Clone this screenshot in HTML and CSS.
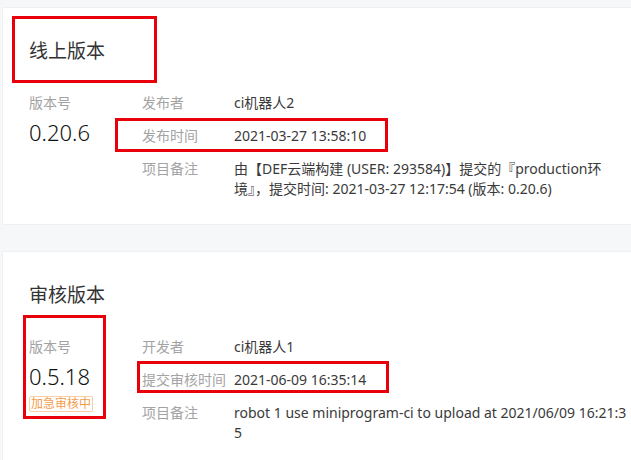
FILE: index.html
```html
<!DOCTYPE html>
<html lang="zh-CN">
<head>
    <meta charset="UTF-8">
    <meta name="viewport" content="width=device-width, initial-scale=1.0">
    <title>版本管理</title>
    <link rel="stylesheet" href="styles.css">
</head>
<body>
    <div class="page">
        <section class="card">
            <h2 class="card-title">线上版本</h2>
            <div class="info">
                <div class="version">
                    <p class="version-label">版本号</p>
                    <p class="version-num">0.20.6</p>
                </div>
                <ul class="fields">
                    <li><span class="label">发布者</span><span class="value">ci机器人2</span></li>
                    <li><span class="label">发布时间</span><span class="value">2021-03-27 13:58:10</span></li>
                    <li><span class="label">项目备注</span><span class="value">由【DEF云端构建 (USER: 293584)】提交的『production环境』，提交时间: 2021-03-27 12:17:54 (版本: 0.20.6)</span></li>
                </ul>
            </div>
            <div class="mark mark-title"></div>
            <div class="mark mark-time"></div>
        </section>

        <section class="card">
            <h2 class="card-title">审核版本</h2>
            <div class="info">
                <div class="version">
                    <p class="version-label">版本号</p>
                    <p class="version-num">0.5.18</p>
                    <span class="tag">加急审核中</span>
                </div>
                <ul class="fields">
                    <li><span class="label">开发者</span><span class="value">ci机器人1</span></li>
                    <li><span class="label">提交审核时间</span><span class="value">2021-06-09 16:35:14</span></li>
                    <li><span class="label">项目备注</span><span class="value">robot 1 use miniprogram-ci to upload at 2021/06/09 16:21:35</span></li>
                </ul>
            </div>
            <div class="mark mark-version"></div>
            <div class="mark mark-audit"></div>
        </section>
    </div>
</body>
</html>
```

FILE: styles.css
```css
body {
    margin: 0;
    background-color: #f6f7f9;
    font-family: "Noto Sans", "Noto Sans CJK SC", sans-serif;
    color: #333;
}
.page {
    padding: 7px 0 0 2px;
}
.card {
    position: relative;
    background-color: #fff;
    border: 1px solid #eef0f3;
    border-right: none;
    padding: 30px 4px 25px 26px;
    margin-bottom: 26px;
}
.card-title {
    margin: 0;
    font-size: 19px;
    font-weight: normal;
    line-height: 26px;
    color: #333;
}
.info {
    display: flex;
    margin-top: 29px;
}
.version {
    width: 113px;
    flex-shrink: 0;
}
p {
    margin: 0;
}
.version-label {
    font-size: 14px;
    line-height: 20px;
    color: #a3a3a3;
}
.version-num {
    margin-top: 4px;
    font-size: 22px;
    line-height: 30px;
    font-weight: 300;
    color: #111;
}
.tag {
    display: inline-block;
    margin-top: 1px;
    padding: 0 1px;
    border: 1px solid #f9cfa5;
    border-radius: 2px;
    color: #f29c4c;
    font-size: 12px;
    line-height: 14px;
}
.fields {
    flex: 1;
    list-style-type: none;
    margin: 0;
    padding: 0;
    display: flex;
    flex-direction: column;
    gap: 13px;
}
.fields li {
    display: flex;
    font-size: 14px;
    line-height: 20px;
}
.label {
    width: 92px;
    flex-shrink: 0;
    color: #a3a3a3;
}
.value {
    flex: 1;
    color: #3a3a3a;
    word-break: break-all;
}

/* annotation boxes */
.mark {
    position: absolute;
    border: 3px solid #e8000b;
}
.mark-title {
    left: 9px;
    top: 8px;
    width: 139px;
    height: 61px;
}
.mark-time {
    left: 112px;
    top: 110px;
    width: 267px;
    height: 28px;
}
.mark-version {
    left: 20px;
    top: 63px;
    width: 77px;
    height: 98px;
}
.mark-audit {
    left: 134px;
    top: 109px;
    width: 246px;
    height: 26px;
}
```
